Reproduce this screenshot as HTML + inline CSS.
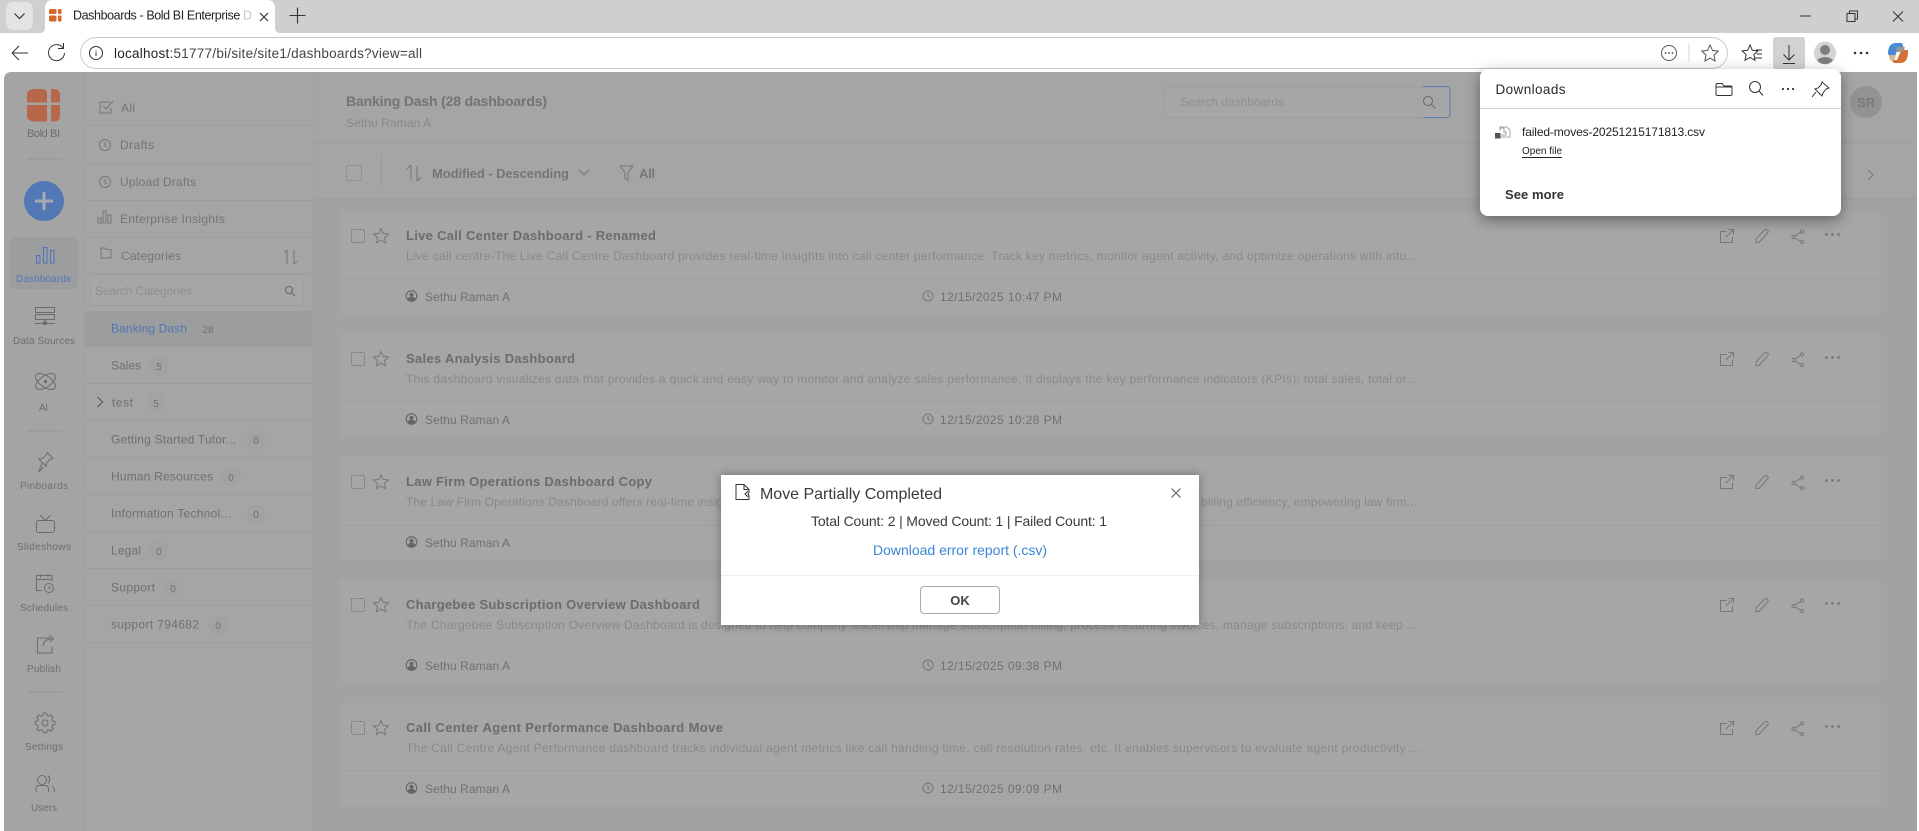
<!DOCTYPE html>
<html lang="en"><head><meta charset="utf-8"><title>Dashboards - Bold BI Enterprise</title>
<style>
html,body{margin:0;padding:0;background:#fff;width:1919px;height:831px;overflow:hidden}
svg{display:block;font-family:"Liberation Sans",sans-serif}
.ic{fill:none;stroke:#777;stroke-width:1}
.cn{font-size:12px;fill:#6f6f6f}
.nl{font-size:10px;fill:#6e6e6e}
.pl{font-size:12px;fill:#747474}
.ti{font-size:13px;font-weight:bold;fill:#6d6b6d}
.de{font-size:12px;fill:#8a898a}
.au{font-size:12px;fill:#707070}
.c{font-size:10px;fill:#707070;text-anchor:middle}
.br{fill:none;stroke:#333;stroke-width:1}
</style></head><body>
<svg width="1919" height="831" viewBox="0 0 1919 831" xmlns="http://www.w3.org/2000/svg">
<defs>
<g id="star"><path class="ic" d="M0-7.500 2.200-2.600 7.500-2 3.500 1.500 4.600 6.800 0 4.100-4.600 6.800-3.500 1.500-7.500-2-2.200-2.600Z"/></g>
<g id="clock"><circle class="ic" cx="0" cy="0" r="5"/><path class="ic" d="M0-3V0L2 1.500"/></g>
<g id="user"><circle cx="0" cy="0" r="5.300" fill="none" stroke="#666" stroke-width="1.100"/><circle cx="0" cy="-1.200" r="2" fill="#666"/><path d="M-4 3C-3 1-1 .8 0 .8S3 1 4 3L2 5H-2Z" fill="#666"/></g>
<g id="actions">
<path class="ic" d="M1726.500-4.500H1720.500V6.500H1732.500V1M1726 1L1733-6M1728.500-6.500H1733.500V-1.500"/>
<path class="ic" d="M1756 6.500v-3.500l8.500-9q1.500-1 3 0t0 3l-8.500 9.500Z"/>
<circle class="ic" cx="1793.500" cy="1" r="1.600"/><circle class="ic" cx="1802" cy="-4.500" r="1.600"/><circle class="ic" cx="1802" cy="6" r="1.600"/><path class="ic" d="M1795 0l5.500-3.600M1795 2l5.500 3.300"/>
<g fill="#777"><circle cx="1826.500" cy="-1.500" r="1.400"/><circle cx="1832.500" cy="-1.500" r="1.400"/><circle cx="1838.500" cy="-1.500" r="1.400"/></g>
</g>
<g id="card">
<rect x="340" y="0" width="1541" height="103" fill="#a6a6a6"/>
<path d="M340 68H1881" stroke="#9e9e9e"/>
<rect x="351.500" y="18.500" width="13" height="13" rx="1" class="ic" stroke-dasharray="1.500 1"/>
<use href="#star" x="381" y="25"/>
<use href="#user" x="411.500" y="85"/>
<use href="#clock" x="928" y="85"/>
<use href="#actions" y="25"/>
</g>
</defs>

<!-- browser chrome -->
<rect width="1919" height="33" fill="#cfcfcf"/>
<rect y="33" width="1919" height="39" fill="#fff"/>
<rect x="6" y="2" width="27" height="28" rx="7" fill="#e4e4e4"/>
<path class="br" d="M14.500 13.500l5 5 5-5" style="stroke-width:1.200"/>
<path d="M40 33q5 0 5-6V8q0-8 8-8H267q8 0 8 8V27q0 6 5 6Z" fill="#fff"/>
<g fill="#d9662c"><rect x="49" y="9" width="7.500" height="5" rx="1.500"/><rect x="58" y="9" width="3.500" height="5" rx="1"/><rect x="49" y="15.500" width="7.500" height="6" rx="1.500"/><rect x="58" y="15.500" width="3.500" height="6" rx="1"/></g>
<text x="73" y="19.500" font-size="12.500" fill="#222" textLength="179">Dashboards - Bold BI Enterprise D</text>
<rect x="240" y="4" width="16" height="24" fill="#fff" fill-opacity=".75"/>
<path d="M260 13l8 8M268 13l-8 8" stroke="#333" stroke-width="1.200"/>
<path d="M297.500 7.500v16M289.500 15.500h16" stroke="#333" stroke-width="1.100"/>
<path d="M1800 16h11" stroke="#333" stroke-width="1"/>
<path class="br" d="M1847 13.500h8v8h-8ZM1849.500 13.500v-2.500h8v8h-2.500"/>
<path d="M1893 11.500l10 10M1903 11.500l-10 10" stroke="#333" stroke-width="1"/>

<path class="br" d="M12 53h16M12 53l7-7M12 53l7 7"/>
<path class="br" d="M63 48a8 8 0 1 0 1.500 5M63.500 43v5.500h-5.500"/>
<rect x="80.500" y="37.500" width="1647" height="31" rx="15.500" fill="#fff" stroke="#c9c9c9"/>
<circle cx="96" cy="53" r="6.500" class="br"/><path d="M96 50v.8M96 52v4" stroke="#333"/>
<text x="114" y="58" font-size="13.500" fill="#222" textLength="308"><tspan>localhost</tspan><tspan fill="#444">:51777/bi/site/site1/dashboards?view=all</tspan></text>
<circle cx="1669" cy="53" r="7.500" class="br" style="stroke:#555"/><g fill="#444"><circle cx="1665.500" cy="53" r=".9"/><circle cx="1669" cy="53" r=".9"/><circle cx="1672.500" cy="53" r=".9"/></g>
<path d="M1689 44v18" stroke="#d4d4d4"/>
<path class="br" d="M1710 45l2.500 5.400 5.700.700-4.200 4 1.100 5.900-5.100-2.900-5.100 2.900 1.100-5.900-4.200-4 5.700-.700Z" style="stroke:#555"/>
<path class="br" d="M1750 45l2.400 5.300 5.500.600-4 3.800 1.100 5.600-5-2.800-5 2.800 1.100-5.600-4-3.800 5.500-.600ZM1756 50h6M1756.500 54h5.500M1755 58h7"/>
<rect x="1773" y="37" width="32" height="32" rx="3" fill="#d2d2d2"/>
<path class="br" d="M1789 45v15M1783.500 54.500l5.500 5.500 5.500-5.500M1783 63.500h12"/>
<ellipse cx="1825" cy="53" rx="11" ry="11.500" fill="#d3d3d3"/><circle cx="1825" cy="50" r="5" fill="#7d7d7d"/><path d="M1817 60q8-6 16 0 -3 4-8 4t-8-4Z" fill="#7d7d7d"/>
<g fill="#333"><circle cx="1855" cy="53" r="1.300"/><circle cx="1861" cy="53" r="1.300"/><circle cx="1867" cy="53" r="1.300"/></g>
<path d="M1888 54q0-11 8-11h6l3 8h-8l-2 5q-1 3-4 3Z" fill="#4a8bd6"/>
<path d="M1908 52q0 11-8 11h-6l-3-3h6l3-7 3-3h5Z" fill="#d2703a"/>
<path d="M1889 55h7l-2 6-4-1Z" fill="#d9b58f"/>
<path d="M1897 47h8l-3 5h-6Z" fill="#9a9a9a"/>

<!-- page background -->
<path d="M4 831V80q0-8 8-8H1908q9 0 9 9V831Z" fill="#a1a2a4"/>
<path d="M4 831V80q0-8 8-8H85V831Z" fill="#a4a4a4"/>
<rect x="85" y="72" width="228" height="759" fill="#a5a5a5"/>
<path d="M84.500 72V831M312.500 72V831" stroke="#9c9c9c" stroke-dasharray="1 1"/>
<rect x="313" y="72" width="1604" height="70" fill="#a5a5a5"/>
<rect x="313" y="143" width="1604" height="55" fill="#a5a5a5"/>
<path d="M313 142.500H1917M313 198.500H1917" stroke="#9d9d9d"/>

<!-- left nav -->
<g fill="#b9674a"><path d="M34 89h8q5 0 5 5v8.500H27V96q0-7 7-7Z"/><path d="M51 89h3q6 0 6 6v7.500h-9Z"/><path d="M27 105h20v16.500h-13q-7 0-7-7Z"/><path d="M51 105h9v10q0 6.500-6 6.500h-3Z"/></g>
<text x="27" y="137" class="nl" style="font-size:11px" textLength="33" fill="#666">Bold BI</text>
<path d="M27 159h35" stroke="#949494"/>
<circle cx="44" cy="201" r="20" fill="#5278b5"/><path d="M44 192v18M35 201h18" stroke="#a8abb0" stroke-width="3"/>
<rect x="9" y="237" width="69" height="52" rx="6" fill="#9c9d9f"/>
<g fill="none" stroke="#5276b3" stroke-width="1.100"><rect x="36.500" y="255.500" width="3.500" height="7.500"/><rect x="43.500" y="247.500" width="3.500" height="15.500"/><rect x="50.500" y="250.500" width="3.500" height="12.500"/></g>
<text x="16" y="282" class="nl" textLength="55" style="fill:#5276b3">Dashboards</text>
<g fill="none" stroke="#6c6c6c" stroke-width="1">
<rect x="35.500" y="307.500" width="19" height="5"/><rect x="35.500" y="314.500" width="19" height="5"/><path d="M45 320v3M35 323.500h20"/><circle cx="45" cy="323" r="1.600" fill="#6c6c6c"/>
<ellipse cx="45.500" cy="381.500" rx="11.500" ry="5.500" transform="rotate(-35 45.500 381.500)"/><ellipse cx="45.500" cy="381.500" rx="11.500" ry="5.500" transform="rotate(35 45.500 381.500)"/><circle cx="45.500" cy="381.500" r="1.100" fill="#6c6c6c"/>
<path d="M47.500 452.500l5.500 6-3 .8-3.500 3.700-.3 3.500-7.500-7.500 3.500-.3 4-3.700ZM42 463.500l-3.500 8.500 5-5"/>
<rect x="36.500" y="520.500" width="18" height="12" rx="2"/><path d="M40 515l5.500 5.500 5-5.500"/>
<path d="M42 590.500h-5.500v-15h15.500v6M40.500 574v3.500M48 574v3.500M36.500 579.500h15.500"/><circle cx="49" cy="588" r="4.500"/><path d="M49 586v2.300h2"/>
<path d="M50 638h-12.500v15h14.500v-6M43 646q1-7 9-7M49.500 635.500l4 3.500-4 3"/>
<path transform="translate(45 723)" stroke-linejoin="round" d="M1.560-9.880 2.150-7.500 3.780-6.820 5.880-8.090 8.090-5.880 6.820-3.780 7.500-2.150 9.880-1.560 9.880 1.560 7.500 2.150 6.820 3.780 8.090 5.880 5.880 8.090 3.780 6.820 2.150 7.500 1.560 9.880-1.560 9.880-2.150 7.500-3.780 6.820-5.880 8.090-8.090 5.880-6.820 3.780-7.500 2.150-9.880 1.560-9.880-1.560-7.500-2.150-6.820-3.780-8.090-5.880-5.880-8.090-3.780-6.820-2.150-7.500-1.560-9.880Z"/><circle cx="45" cy="723" r="3"/>
<circle cx="42" cy="780" r="4.500"/><path d="M36 792v-3q0-3.500 3.500-3.500h5.500q3.500 0 3.500 3.500v3M48 775.500q3.500 3.500 0 8M52 786q2.500 1.500 2.500 6"/>
</g>
<text x="13" y="344" class="nl" textLength="62">Data Sources</text>
<text x="39" y="411" class="nl" textLength="9">AI</text>
<path d="M27 431h35" stroke="#949494"/>
<text x="20" y="489" class="nl" textLength="48">Pinboards</text>
<text x="17" y="550" class="nl" textLength="54">Slideshows</text>
<text x="20" y="611" class="nl" textLength="48">Schedules</text>
<text x="27" y="672" class="nl" textLength="34">Publish</text>
<path d="M27 692h35" stroke="#949494"/>
<text x="25" y="750" class="nl" textLength="38">Settings</text>
<text x="31" y="811" class="nl" textLength="26">Users</text>

<!-- categories panel -->
<g stroke="#9e9e9e"><path d="M85 125.500H312M85 163.500H312M85 200.500H312M85 237.500H312M85 273.500H312M85 383.500H312M85 420.500H312M85 457.500H312M85 494.500H312M85 531.500H312M85 568.500H312M85 605.500H312M85 642.500H312"/></g>
<g class="ic">
<path d="M110 102h-10v11h11v-5M103 106l3 3 7-8"/>
<circle cx="105" cy="145" r="5.500"/><path d="M105 142v3.500l2 1.500"/>
<circle cx="105" cy="182" r="5.500"/><path d="M105 179v3.500l2 1.500"/>
<path d="M98 223h3v-5h-3ZM103 223h3v-12h-3ZM108 223h3v-8h-3Z"/>
<path d="M101 258v-10h4l1.500 1.500h4.500v8.500Z"/>
<path d="M288 252v14M288 252l-3 3M295 266v-14M295 266l3-3" transform="translate(-1 -2)"/>
</g>
<text x="121" y="112" class="pl" textLength="14">All</text>
<text x="120" y="149" class="pl" textLength="34">Drafts</text>
<text x="120" y="186" class="pl" textLength="76">Upload Drafts</text>
<text x="120" y="223" class="pl" textLength="105">Enterprise Insights</text>
<text x="121" y="260" class="pl" textLength="60">Categories</text>
<rect x="90.500" y="274.500" width="213" height="31" rx="3" fill="#a6a6a6" stroke="#9f9f9f"/>
<text x="95" y="295" font-size="12" fill="#8f8f8f" textLength="97">Search Categories</text>
<g class="ic" style="stroke:#666"><circle cx="289" cy="290" r="3.500"/><path d="M291.500 292.500l3.500 3.500"/></g>
<rect x="85" y="311" width="227" height="36" fill="#9c9d9f"/>
<text x="111" y="332.500" class="cn" textLength="76" style="fill:#5276b3">Banking Dash</text>
<text x="208" y="333" class="c">28</text>
<text x="111" y="369.500" class="cn" textLength="30">Sales</text>
<path class="ic" d="M97.500 397l5 5-5 5" style="stroke:#555"/>
<text x="112" y="406.500" class="cn" textLength="21">test</text>
<text x="111" y="443.500" class="cn" textLength="125">Getting Started Tutor...</text>
<text x="111" y="480.500" class="cn" textLength="102">Human Resources</text>
<text x="111" y="517.500" class="cn" textLength="120">Information Technol...</text>
<text x="111" y="554.500" class="cn" textLength="30">Legal</text>
<text x="111" y="591.500" class="cn" textLength="44">Support</text>
<text x="111" y="628.500" class="cn" textLength="88">support 794682</text>
<g fill="#a2a2a3"><circle cx="159" cy="366" r="10"/><circle cx="156" cy="403" r="10"/><circle cx="256" cy="440" r="10"/><circle cx="231" cy="477" r="10"/><circle cx="256" cy="514" r="10"/><circle cx="159" cy="551" r="10"/><circle cx="173" cy="588" r="10"/><circle cx="218" cy="625" r="10"/></g>
<text x="159" y="370" class="c">5</text><text x="156" y="407" class="c">5</text><text x="256" y="444" class="c">0</text><text x="231" y="481" class="c">0</text><text x="256" y="518" class="c">0</text><text x="159" y="555" class="c">0</text><text x="173" y="592" class="c">0</text><text x="218" y="629" class="c">0</text>

<!-- header -->
<text x="346" y="106" font-size="14" font-weight="bold" fill="#757375" textLength="201">Banking Dash (28 dashboards)</text>
<text x="346" y="127" font-size="12" fill="#8a898a" textLength="85">Sethu Raman A</text>
<rect x="1163.500" y="87.500" width="286" height="30" rx="3" fill="#a6a6a6" stroke="#9f9f9f"/>
<path d="M1423 86.500h24q3 0 3 3v25q0 3-3 3h-24" fill="none" stroke="#5f80b4"/>
<text x="1180" y="106" font-size="12" fill="#8f8f8f">Search dashboards</text>
<g class="ic" style="stroke:#666"><circle cx="1428" cy="101" r="4.500"/><path d="M1431.500 104.500l4 4"/></g>
<circle cx="1866" cy="102" r="16" fill="#929292"/><text x="1866" y="107" font-size="13" fill="#7a7a7a" font-weight="bold" text-anchor="middle">SR</text>

<!-- toolbar -->
<rect x="346.500" y="165.500" width="15" height="15" rx="1" class="ic" style="stroke:#858585" stroke-dasharray="1.500 1"/>
<path d="M381.500 155v32" stroke="#9a9a9a"/>
<g class="ic"><path d="M411 180v-15M411 165l-4 4M417 166v15M417 181l4-4"/><path d="M579 170l5 5 5-5"/><path d="M620 166h13l-5 6.500v8l-3-2v-6Z"/><path d="M1868 170l5 5-5 5"/></g>
<text x="432" y="178" font-size="13" font-weight="bold" fill="#767576" textLength="137">Modified - Descending</text>
<text x="639" y="178" font-size="13" font-weight="bold" fill="#767576" textLength="16">All</text>

<!-- cards -->
<use href="#card" y="211"/><use href="#card" y="334"/><use href="#card" y="457"/><use href="#card" y="580"/><use href="#card" y="703"/>

<text x="406" y="240" class="ti" textLength="250">Live Call Center Dashboard - Renamed</text>
<text x="406" y="260" class="de" textLength="1011">Live call centre-The Live Call Centre Dashboard provides real-time insights into call center performance. Track key metrics, monitor agent activity, and optimize operations with intu...</text>
<text x="425" y="301" class="au" textLength="85">Sethu Raman A</text>
<text x="940" y="301" class="au" textLength="122">12/15/2025 10:47 PM</text>

<text x="406" y="363" class="ti" textLength="169">Sales Analysis Dashboard</text>
<text x="406" y="383" class="de" textLength="1011">This dashboard visualizes data that provides a quick and easy way to monitor and analyze sales performance. It displays the key performance indicators (KPIs): total sales, total or...</text>
<text x="425" y="424" class="au" textLength="85">Sethu Raman A</text>
<text x="940" y="424" class="au" textLength="122">12/15/2025 10:28 PM</text>

<text x="406" y="486" class="ti" textLength="246">Law Firm Operations Dashboard Copy</text>
<text x="406" y="506" class="de" textLength="1011">The Law Firm Operations Dashboard offers real-time insights into case management, attorney performance, client matters, revenue tracking, and billing efficiency, empowering law firm...</text>
<text x="425" y="547" class="au" textLength="85">Sethu Raman A</text>

<text x="406" y="609" class="ti" textLength="294">Chargebee Subscription Overview Dashboard</text>
<text x="406" y="629" class="de" textLength="1011">The Chargebee Subscription Overview Dashboard is designed to help company leadership manage subscription billing, process recurring invoices, manage subscriptions, and keep ...</text>
<text x="425" y="670" class="au" textLength="85">Sethu Raman A</text>
<text x="940" y="670" class="au" textLength="122">12/15/2025 09:38 PM</text>

<text x="406" y="732" class="ti" textLength="317">Call Center Agent Performance Dashboard Move</text>
<text x="406" y="752" class="de" textLength="1014">The Call Centre Agent Performance dashboard tracks individual agent metrics like call handling time, call resolution rates, etc. It enables supervisors to evaluate agent productivity ...</text>
<text x="425" y="793" class="au" textLength="85">Sethu Raman A</text>
<text x="940" y="793" class="au" textLength="122">12/15/2025 09:09 PM</text>

<!-- downloads panel -->
<rect x="1480" y="69" width="361" height="147" rx="8" fill="#fff" style="filter:drop-shadow(0 4px 7px rgba(0,0,0,.4))"/>
<text x="1495.500" y="94" font-size="13.500" fill="#2a2a2a" textLength="70">Downloads</text>
<path d="M1480 108.500H1841" stroke="#d2d2d2"/>
<g class="br">
<path d="M1718 83.500h4l2 2.500h7q1 0 1 1.500V94q0 1.500-1.500 1.500h-13q-1.500 0-1.500-1.500V85q0-1.500 1.500-1.500ZM1716 87h16"/>
<circle cx="1755" cy="87" r="5.500"/><path d="M1759 91l4 4.500"/>
<path d="M1822 82l7 6-3 1-3 4-1 3-7-7 3-1 3-3ZM1816 92l-4 5"/>
</g>
<g fill="#333"><circle cx="1783" cy="89" r="1.100"/><circle cx="1788" cy="89" r="1.100"/><circle cx="1793" cy="89" r="1.100"/></g>
<path d="M1499 127h8l3 3v7h-10" fill="#fff" stroke="#a8a8a8"/><rect x="1495" y="133" width="5.500" height="5.500" fill="#555"/><path d="M1500 131v-3h4v4h2v3h-5" fill="none" stroke="#888" stroke-width=".8"/>
<text x="1522" y="136" font-size="12" fill="#222" textLength="183">failed-moves-20251215171813.csv</text>
<text x="1522" y="154" font-size="10" fill="#222" textLength="40">Open file</text>
<path d="M1522 157.500h40" stroke="#222"/>
<text x="1505" y="199" font-size="13" fill="#333" font-weight="bold" textLength="59">See more</text>

<!-- dialog -->
<rect x="721" y="475" width="478" height="150" fill="#fff" style="filter:drop-shadow(0 0 5px rgba(0,0,0,.35))"/>
<path class="br" d="M736 484.500h8l5 5v3l-1 1.500 1 2v3.500h-13ZM744 484.500v5h5M748 491l-3 3 3 3"/>
<text x="760" y="499" font-size="16" fill="#3a3a3a" textLength="182">Move Partially Completed</text>
<path d="M1171.500 488.500l9 9M1180.500 488.500l-9 9" stroke="#666" stroke-width="1.200"/>
<text x="811" y="526" font-size="14" fill="#3a3a3a" textLength="296">Total Count: 2 | Moved Count: 1 | Failed Count: 1</text>
<text x="873" y="555" font-size="14" fill="#3a85d8" textLength="174">Download error report (.csv)</text>
<path d="M721 575.500H1199" stroke="#dcdcdc" stroke-dasharray="1 1"/>
<rect x="920.500" y="586.500" width="79" height="27" rx="3.500" fill="#fff" stroke="#a8a8a8"/>
<text x="960" y="605" font-size="13" fill="#444" font-weight="bold" text-anchor="middle">OK</text>
</svg>
</body></html>
